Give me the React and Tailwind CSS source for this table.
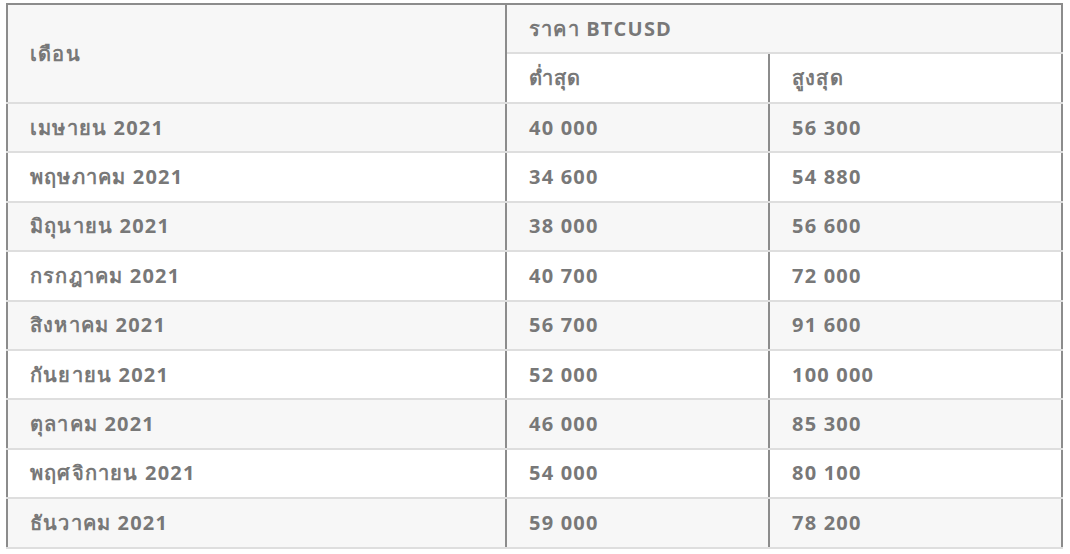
const rows = [
  ['เมษายน 2021', '40 000', '56 300'],
  ['พฤษภาคม 2021', '34 600', '54 880'],
  ['มิถุนายน 2021', '38 000', '56 600'],
  ['กรกฎาคม 2021', '40 700', '72 000'],
  ['สิงหาคม 2021', '56 700', '91 600'],
  ['กันยายน 2021', '52 000', '100 000'],
  ['ตุลาคม 2021', '46 000', '85 300'],
  ['พฤศจิกายน 2021', '54 000', '80 100'],
  ['ธันวาคม 2021', '59 000', '78 200'],
];

export default function App() {
  const cell = 'border-x-2 border-x-[#8c8c8c] border-y-2 border-y-[#dedede] px-[22px] text-left align-middle';
  return (
    <div className="min-h-screen bg-white pl-[6px] pt-[3px] font-['Open_Sans','Noto_Sans',sans-serif] text-[20px] tracking-[1.2px] font-bold text-[#787878]">
      <table className="border-collapse table-fixed w-[1055px]">
        <colgroup>
          <col className="w-[499px]" />
          <col className="w-[263px]" />
          <col className="w-[293px]" />
        </colgroup>
        <thead>
          <tr className="h-[49px]">
            <th rowSpan={2} className={`${cell} bg-[#f7f7f7] border-t-[#8c8c8c] font-bold`}>เดือน</th>
            <th colSpan={2} className={`${cell} bg-[#f7f7f7] border-t-[#8c8c8c] font-bold`}>ราคา BTCUSD</th>
          </tr>
          <tr className="h-[50px]">
            <th className={`${cell} bg-white font-bold`}>ต่ำสุด</th>
            <th className={`${cell} bg-white font-bold`}>สูงสุด</th>
          </tr>
        </thead>
        <tbody>
          {rows.map((r, i) => (
            <tr key={r[0]} className={`h-[49.4px] ${i % 2 === 0 ? 'bg-[#f7f7f7]' : 'bg-white'}`}>
              {r.map((c, j) => (
                <td key={j} className={cell}>{c}</td>
              ))}
            </tr>
          ))}
        </tbody>
      </table>
    </div>
  );
}
